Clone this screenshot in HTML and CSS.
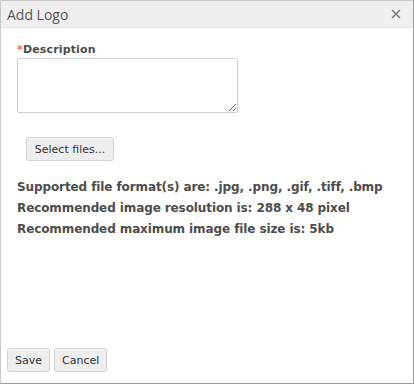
FILE: index.html
```html
<!DOCTYPE html>
<html>
<head>
<meta charset="utf-8">
<link rel="stylesheet" href="styles.css">
</head>
<body>
<div class="dialog">
  <div class="titlebar">
    <span class="title">Add Logo</span>
    <svg class="close" width="10" height="10" viewBox="0 0 10 10"><path d="M1 1L9 9M9 1L1 9" stroke="#777" stroke-width="1.4" fill="none"/></svg>
  </div>
  <div class="content">
    <label class="label"><span class="req">*</span>Description</label>
    <textarea class="desc"></textarea>
    <div class="upload">
      <button class="btn select">Select files...</button>
    </div>
    <div class="info">
      <p>Supported file format(s) are: .jpg, .png, .gif, .tiff, .bmp</p>
      <p>Recommended image resolution is: 288 x 48 pixel</p>
      <p>Recommended maximum image file size is: 5kb</p>
    </div>
  </div>
  <div class="footer">
    <button class="btn">Save</button>
    <button class="btn">Cancel</button>
  </div>
</div>
</body>
</html>
```
FILE: styles.css
```css
html, body {
  margin: 0;
  padding: 0;
  background: #fff;
}
body {
  font-family: "DejaVu Sans", Verdana, sans-serif;
  color: #4d4d4d;
}
.dialog {
  box-sizing: border-box;
  width: 414px;
  height: 384px;
  border: 1px solid #c8c8c8;
  border-right-color: #9a9a9a;
  border-bottom-color: #9a9a9a;
  display: flex;
  flex-direction: column;
  background: #fff;
}
.titlebar {
  height: 26px;
  background: #efeff0;
  border-bottom: 1px solid #e4e4e4;
  display: flex;
  align-items: center;
  justify-content: space-between;
  padding: 0 12px 0 6px;
  flex: none;
}
.title {
  font-family: "Open Sans", sans-serif;
  font-size: 14px;
  color: #555;
}
.close {
  display: block;
}
.content {
  flex: 1;
  padding: 15px 0 0 16px;
  display: flex;
  flex-direction: column;
  align-items: flex-start;
}
.label {
  font-size: 11px;
  font-weight: bold;
  letter-spacing: 0.15px;
  color: #4d4d4d;
  line-height: 14px;
}
.req {
  color: #f26b22;
}
.desc {
  box-sizing: border-box;
  width: 221px;
  height: 55px;
  margin-top: 1px;
  border: 1px solid #cfcfcf;
  border-radius: 2px;
  resize: both;
  padding: 2px;
  font-family: inherit;
}
.upload {
  margin-top: 24px;
  padding-left: 9px;
}
.btn {
  box-sizing: border-box;
  height: 24px;
  padding: 0 7px;
  font-family: inherit;
  font-size: 11px;
  color: #333;
  background: #eeeeee;
  border: 1px solid #d2d2d2;
  border-radius: 3px;
  box-shadow: inset 0 1px 0 #f7f7f7;
}
.select {
  width: 88px;
}
.info {
  margin-top: 16px;
}
.info p {
  margin: 0;
  font-size: 12px;
  font-weight: bold;
  letter-spacing: -0.1px;
  line-height: 21px;
  color: #4d4d4d;
}
.footer {
  flex: none;
  padding: 0 0 11px 6px;
  display: flex;
  gap: 4px;
}
.footer .btn {
  height: 24px;
  padding: 0 7px;
}
```
